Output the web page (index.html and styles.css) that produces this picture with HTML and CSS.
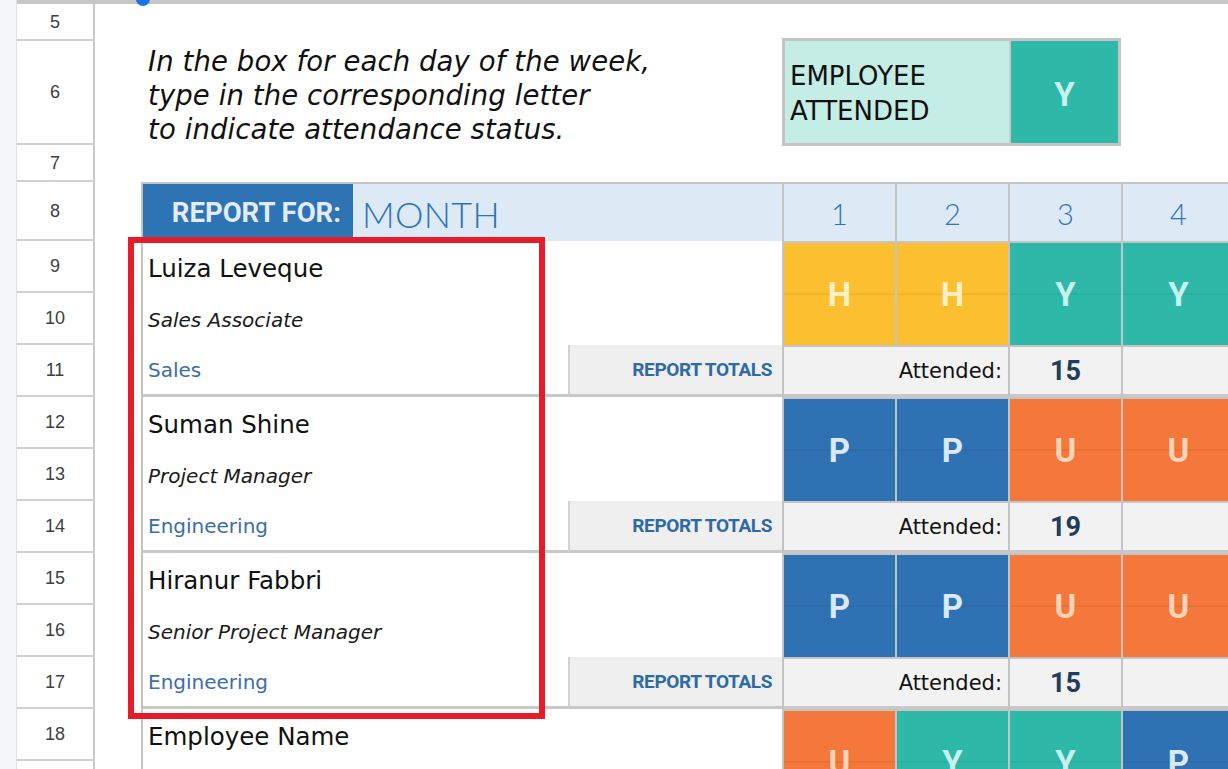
FILE: index.html
```html
<!DOCTYPE html>
<html>
<head>
<meta charset="utf-8">
<title>Attendance</title>
<link rel="stylesheet" href="styles.css">
</head>
<body>
<div class="sheet">
  <div class="gutter"></div>
  <div class="band"></div>

  <div class="rh">5</div>

  <div class="rh">6</div>
  <div class="intro">In the box for each day of the week,<br>type in the corresponding letter<br>to indicate attendance status.</div>
  <div class="legend">
    <div class="legend-label">EMPLOYEE<br>ATTENDED</div>
    <div class="legend-key">Y</div>
  </div>

  <div class="rh">7</div>

  <div class="rh">8</div>
  <div class="report-for">REPORT FOR:</div>
  <div class="month">MONTH</div>
  <div class="day-h d1">1</div>
  <div class="day-h d2">2</div>
  <div class="day-h d3">3</div>
  <div class="day-h d4">4</div>

  <!-- Employee 1 -->
  <div class="rh">9</div>
  <div class="name">Luiza Leveque</div>
  <div class="mark d1 h">H</div>
  <div class="mark d2 h">H</div>
  <div class="mark d3 y">Y</div>
  <div class="mark d4 y">Y</div>
  <div class="rh">10</div>
  <div class="title">Sales Associate</div>
  <div class="rh">11</div>
  <div class="dept">Sales</div>
  <div class="totals">REPORT TOTALS</div>
  <div class="att-label">Attended:</div>
  <div class="att-num">15</div>
  <div class="att-blank"></div>

  <!-- Employee 2 -->
  <div class="rh">12</div>
  <div class="name">Suman Shine</div>
  <div class="mark d1 p">P</div>
  <div class="mark d2 p">P</div>
  <div class="mark d3 u">U</div>
  <div class="mark d4 u">U</div>
  <div class="rh">13</div>
  <div class="title">Project Manager</div>
  <div class="rh">14</div>
  <div class="dept">Engineering</div>
  <div class="totals">REPORT TOTALS</div>
  <div class="att-label">Attended:</div>
  <div class="att-num">19</div>
  <div class="att-blank"></div>

  <!-- Employee 3 -->
  <div class="rh">15</div>
  <div class="name">Hiranur Fabbri</div>
  <div class="mark d1 p">P</div>
  <div class="mark d2 p">P</div>
  <div class="mark d3 u">U</div>
  <div class="mark d4 u">U</div>
  <div class="rh">16</div>
  <div class="title">Senior Project Manager</div>
  <div class="rh">17</div>
  <div class="dept">Engineering</div>
  <div class="totals">REPORT TOTALS</div>
  <div class="att-label">Attended:</div>
  <div class="att-num">15</div>
  <div class="att-blank"></div>

  <!-- Employee 4 -->
  <div class="rh">18</div>
  <div class="name">Employee Name</div>
  <div class="mark d1 u">U</div>
  <div class="mark d2 y">Y</div>
  <div class="mark d3 y">Y</div>
  <div class="mark d4 p">P</div>
  <div class="rh">19</div>
  <div class="title"></div>
</div>

<div class="handle"></div>
<div class="highlight"></div>
</body>
</html>
```

FILE: styles.css
```css
* { box-sizing: border-box; }

html, body {
  margin: 0;
  padding: 0;
  background: #ffffff;
  overflow: hidden;
  width: 1228px;
  height: 769px;
}

body {
  position: relative;
  font-family: "DejaVu Sans", "Liberation Sans", sans-serif;
}

.sheet {
  display: grid;
  grid-template-columns: 17px 78px 46px 212px 215px 214px 113px 113px 113px 113px;
  grid-template-rows: 4px 37px 104px 37px 59px repeat(11, 52px);
}

.gutter {
  grid-column: 1;
  grid-row: 1 / -1;
  background: #f5f6f7;
  border-right: 1px solid #e3e3e3;
}

.band {
  grid-column: 2 / -1;
  grid-row: 1;
  background: #c6c6c6;
}

/* row headers */
.rh {
  grid-column: 2;
  display: flex;
  align-items: center;
  justify-content: center;
  font-family: "Liberation Sans", Arial, sans-serif;
  font-size: 18px;
  color: #3c4043;
  border-bottom: 2px solid #d0d0d0;
  border-right: 2px solid #c9c9c9;
  background: #fff;
  padding-top: 1px;
}

/* intro + legend */
.intro {
  grid-column: 4 / 7;
  align-self: center;
  padding-left: 7px;
  font-style: italic;
  font-size: 27.5px;
  line-height: 34px;
  letter-spacing: 0.1px;
  color: #111;
  margin-top: 3px;
  white-space: nowrap;
}

.legend {
  grid-column: 7 / 10;
  display: flex;
  margin: -3px 0 -1px 0;
  border: 3px solid #c4c4c4;
}

.legend-label {
  flex: 0 0 226px;
  background: #c4ede6;
  display: flex;
  align-items: center;
  padding-left: 5px;
  padding-top: 4px;
  font-size: 26px;
  line-height: 35px;
  color: #111;
  border-right: 2px solid #c8c8c8;
}

.legend-key {
  flex: 1;
  background: #2eb8a7;
  color: #c6f1f0;
  font-family: Roboto, "Liberation Sans", sans-serif;
  font-weight: 700;
  font-size: 33px;
  display: flex;
  align-items: center;
  justify-content: center;
  padding-top: 4px;
}

/* header row */
.report-for {
  grid-column: 4;
  background: #2e73b4;
  color: #e2ecf7;
  font-family: Roboto, "Liberation Sans", sans-serif;
  font-weight: 700;
  font-size: 27.5px;
  display: flex;
  align-items: center;
  justify-content: flex-end;
  padding-right: 12px;
  border-top: 2px solid #c4c4c4;
  border-left: 2px solid #c4c4c4;
}

.month {
  grid-column: 5 / 7;
  background: #dde9f5;
  color: #2e75b6;
  font-family: Lato, "Liberation Sans", sans-serif;
  font-weight: 300;
  font-size: 36px;
  letter-spacing: 0.3px;
  display: flex;
  align-items: center;
  padding-left: 9px;
  padding-top: 2px;
  border-top: 2px solid #c4c4c4;
}

.day-h {
  background: #dde9f5;
  color: #2e75b6;
  font-family: Lato, "Liberation Sans", sans-serif;
  font-weight: 300;
  font-size: 29px;
  display: flex;
  align-items: center;
  justify-content: center;
  padding-top: 2px;
  border-top: 2px solid #c4c4c4;
  border-left: 2px solid #c4c4c4;
}

.d1 { grid-column: 7; }
.d2 { grid-column: 8; }
.d3 { grid-column: 9; }
.d4 { grid-column: 10; }

/* employee blocks */
.name, .title, .dept {
  display: flex;
  align-items: center;
  padding-left: 5px;
  border-left: 2px solid #c4c4c4;
}

.name {
  grid-column: 4 / 7;
  font-size: 24.5px;
  color: #111;
  padding-top: 2px;
}

.title {
  grid-column: 4 / 7;
  font-style: italic;
  font-size: 20px;
  color: #1a1a1a;
  padding-top: 2px;
}

.dept {
  grid-column: 4 / 6;
  font-size: 20px;
  color: #3b6ea8;
  border-bottom: 3px solid #c8c8c8;
}

.totals {
  grid-column: 6;
  background: #efefef;
  border-left: 2px solid #d2d2d2;
  border-bottom: 3px solid #c8c8c8;
  display: flex;
  align-items: center;
  justify-content: flex-end;
  padding-right: 10px;
  font-family: Roboto, "Liberation Sans", sans-serif;
  font-weight: 700;
  font-size: 19px;
  letter-spacing: -0.4px;
  color: #2e6aa6;
}

.mark {
  grid-row: span 2;
  display: flex;
  align-items: center;
  justify-content: center;
  font-family: Roboto, "Liberation Sans", sans-serif;
  font-weight: 700;
  font-size: 33px;
  border-left: 2px solid #c4c4c4;
  border-top: 2px solid #c4c4c4;
  background-image: linear-gradient(to bottom, transparent 49.5%, rgba(0, 0, 0, 0.05) 49.5%, rgba(0, 0, 0, 0.05) 50.5%, transparent 50.5%);
}

.mark.h { background-color: #fcbf2f; color: #fff1c6; }
.mark.y { background-color: #2eb8a7; color: #c6f1f0; }
.mark.p { background-color: #2e72b3; color: #dbe9f7; }
.mark.u { background-color: #f4773b; color: #fbd3b6; }

.att-label {
  grid-column: 7 / 9;
  background: #f2f2f2;
  border-left: 2px solid #c4c4c4;
  border-top: 2px solid #c4c4c4;
  border-bottom: 3px solid #c8c8c8;
  display: flex;
  align-items: center;
  justify-content: flex-end;
  padding-right: 6px;
  font-size: 21px;
  color: #111;
}

.att-num {
  grid-column: 9;
  background: #f2f2f2;
  border-left: 2px solid #c4c4c4;
  border-top: 2px solid #c4c4c4;
  border-bottom: 3px solid #c8c8c8;
  display: flex;
  align-items: center;
  justify-content: center;
  font-family: Roboto, "Liberation Sans", sans-serif;
  font-weight: 700;
  font-size: 27px;
  color: #1f3d5c;
}

.att-blank {
  grid-column: 10;
  background: #f2f2f2;
  border-left: 2px solid #c4c4c4;
  border-top: 2px solid #c4c4c4;
  border-bottom: 3px solid #c8c8c8;
}

/* overlays */
.handle {
  position: absolute;
  left: 136px;
  top: -7px;
  width: 14px;
  height: 13px;
  border-radius: 50%;
  background: #1a73e8;
}

.highlight {
  position: absolute;
  left: 128px;
  top: 237px;
  width: 417px;
  height: 482px;
  border: 6px solid #e81b2a;
}
```
